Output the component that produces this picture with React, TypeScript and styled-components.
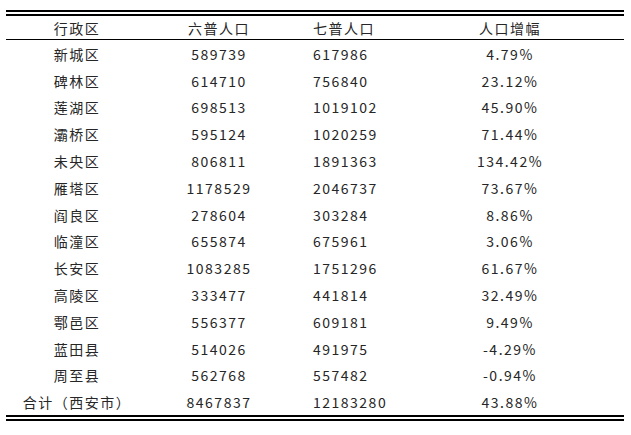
import styled, {createGlobalStyle} from "styled-components";

const GlobalStyle = createGlobalStyle`
  html, body {
    margin: 0;
    padding: 0;
    background: #ffffff;
  }
`;

const Page = styled.div`
  width: 631px;
  height: 435px;
  padding: 10px 7px 0 6px;
  box-sizing: border-box;
  background: #ffffff;
`;

const Table = styled.table`
  width: 618px;
  border-collapse: separate;
  border-spacing: 0;
  table-layout: fixed;
  border-top: 6px double #000;
  border-bottom: 6px double #000;
  font-family: "Noto Sans CJK SC", "Noto Sans", sans-serif;
  font-size: 14px;
  letter-spacing: 1.5px;
  color: #262626;
`;

const HeadRow = styled.tr`
  height: 24px;
`;

const Row = styled.tr`
  height: 26.8px;
`;

const Cell = styled.td<{ $align?: "left" | "center" }>`
  padding: ${(p) => (p.$align === "left" ? "1px 0 0 23px" : "1px 0 0 0")};
  text-align: ${(p) => p.$align ?? "center"};
  vertical-align: middle;
  white-space: nowrap;
  line-height: 18px;
`;

const HeadCell = styled(Cell).attrs({as: "th"})`
  font-weight: normal;
  border-bottom: 1px solid #000;
`;

const rows: [string, string, string, string][] = [
    ["新城区", "589739", "617986", "4.79%"],
    ["碑林区", "614710", "756840", "23.12%"],
    ["莲湖区", "698513", "1019102", "45.90%"],
    ["灞桥区", "595124", "1020259", "71.44%"],
    ["未央区", "806811", "1891363", "134.42%"],
    ["雁塔区", "1178529", "2046737", "73.67%"],
    ["阎良区", "278604", "303284", "8.86%"],
    ["临潼区", "655874", "675961", "3.06%"],
    ["长安区", "1083285", "1751296", "61.67%"],
    ["高陵区", "333477", "441814", "32.49%"],
    ["鄠邑区", "556377", "609181", "9.49%"],
    ["蓝田县", "514026", "491975", "-4.29%"],
    ["周至县", "562768", "557482", "-0.94%"],
    ["合计（西安市）", "8467837", "12183280", "43.88%"],
];

const App = () => {
    return (
        <Page>
            <GlobalStyle/>
            <Table>
                <colgroup>
                    <col style={{width: 142}}/>
                    <col style={{width: 142}}/>
                    <col style={{width: 106}}/>
                    <col style={{width: 228}}/>
                </colgroup>
                <thead>
                <HeadRow>
                    <HeadCell>行政区</HeadCell>
                    <HeadCell>六普人口</HeadCell>
                    <HeadCell $align="left">七普人口</HeadCell>
                    <HeadCell>人口增幅</HeadCell>
                </HeadRow>
                </thead>
                <tbody>
                {rows.map(([name, six, seven, growth]) => (
                    <Row key={name}>
                        <Cell>{name}</Cell>
                        <Cell>{six}</Cell>
                        <Cell $align="left">{seven}</Cell>
                        <Cell>{growth}</Cell>
                    </Row>
                ))}
                </tbody>
            </Table>
        </Page>
    );
};

export default App;
